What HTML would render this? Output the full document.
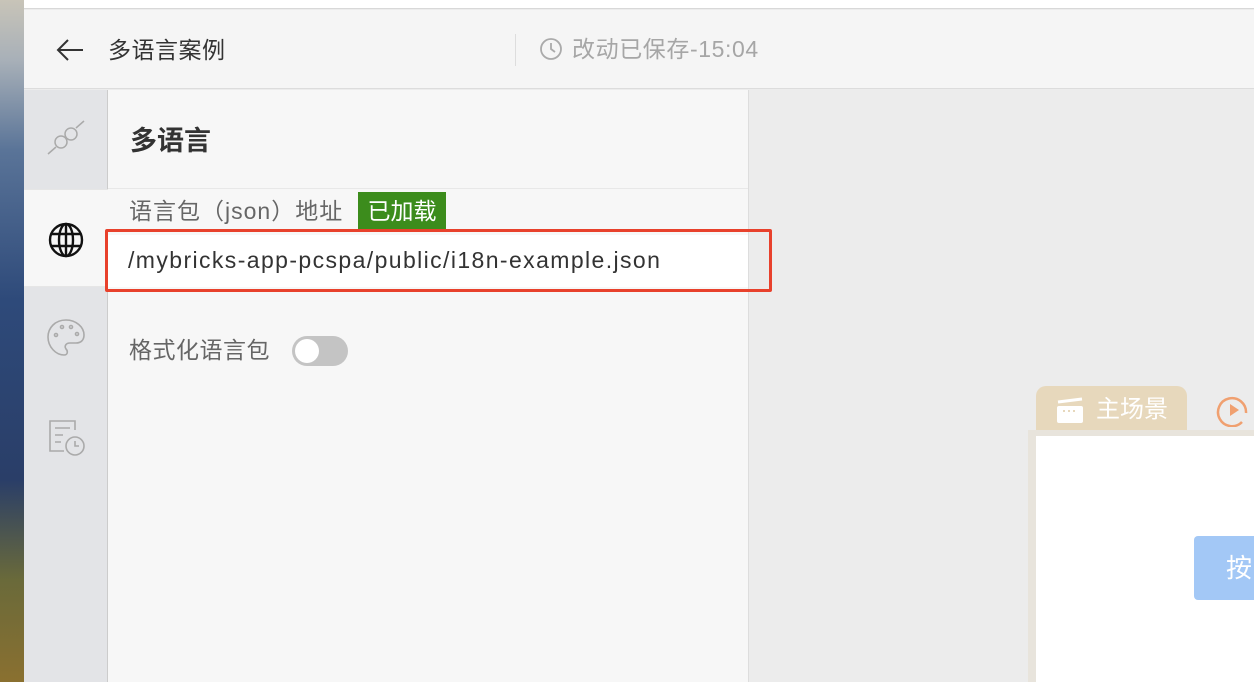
<!DOCTYPE html>
<html><head><meta charset="utf-8"><style>
*{margin:0;padding:0;box-sizing:border-box}
body{width:1254px;height:682px;overflow:hidden;position:relative;background:#ececec;font-family:"Liberation Sans","Noto Sans CJK SC",sans-serif}
.a{position:absolute;white-space:nowrap;line-height:1}
</style></head><body>
<div class="a" style="left:0;top:0;width:24px;height:682px;background:linear-gradient(#c8c4b8 0,#a8b0b8 60px,#5a7498 150px,#2e4a7a 300px,#2a3e68 480px,#6a6a3a 580px,#8a7030 682px)"></div>
<div class="a" style="left:24px;top:0;width:1230px;height:9px;background:#fff;border-bottom:1px solid #d8d8d8"></div>
<div class="a" style="left:24px;top:10px;width:1230px;height:79px;background:#f5f5f5;border-bottom:1px solid #dcdcdc"></div>
<svg class="a" style="left:55px;top:37px" width="30" height="26" viewBox="0 0 30 26"><path d="M13 3 L3 13 L13 23 M3 13 H28" fill="none" stroke="#333" stroke-width="2"/></svg>
<div class="a" style="left:108px;top:39px;font-size:23px;color:#333;letter-spacing:0.5px">多语言案例</div>
<div class="a" style="left:515px;top:34px;width:1px;height:32px;background:#ddd"></div>
<svg class="a" style="left:539px;top:37px" width="24" height="24" viewBox="0 0 24 24"><circle cx="12" cy="12" r="10" fill="none" stroke="#aaa" stroke-width="1.8"/><path d="M12 6v6l4 3" fill="none" stroke="#aaa" stroke-width="1.8"/></svg>
<div class="a" style="left:572px;top:38px;font-size:23px;color:#a6a6a6;letter-spacing:0.6px">改动已保存-15:04</div>
<div class="a" style="left:24px;top:90px;width:84px;height:592px;background:#e3e4e7;border-right:1px solid #ccc"></div>
<div class="a" style="left:24px;top:189px;width:84px;height:98px;background:#f7f7f7;border-top:1px solid #e6e6e6;border-bottom:1px solid #e6e6e6"></div>
<svg class="a" style="left:44px;top:116px" width="44" height="44" viewBox="0 0 44 44"><g fill="none" stroke="#aaa" stroke-width="1.5"><circle cx="17" cy="26" r="6"/><circle cx="27" cy="18" r="6"/><path d="M4 38 L12 31 M32 12 L40 5"/></g></svg>
<svg class="a" style="left:47px;top:221px" width="38" height="38" viewBox="0 0 38 38"><g fill="none" stroke="#111" stroke-width="2.4"><circle cx="19" cy="19" r="16"/><ellipse cx="19" cy="19" rx="7" ry="16"/><path d="M4 13H34M4 25H34M19 3V35"/></g></svg>
<svg class="a" style="left:44px;top:316px" width="44" height="44" viewBox="0 0 44 44"><g fill="none" stroke="#aaa" stroke-width="1.6"><path d="M22 4C11 4 4 12 4 21c0 10 8 18 16 18c4 0 4-4 2-6c-2-3 0-6 4-6h6c5 0 8-3 8-8C40 11 32 4 22 4z"/><circle cx="12" cy="19" r="1.5"/><circle cx="18" cy="11" r="1.5"/><circle cx="27" cy="11" r="1.5"/><circle cx="33" cy="18" r="1.5"/></g></svg>
<svg class="a" style="left:47px;top:418px" width="40" height="40" viewBox="0 0 40 40"><g fill="none" stroke="#aaa" stroke-width="1.6"><path d="M28 12V3H3v30h14M8 10h15M8 17h8M8 24h6"/><circle cx="28" cy="28" r="9"/><path d="M28 23v5h4"/></g></svg>
<div class="a" style="left:108px;top:90px;width:641px;height:592px;background:#f7f7f7;border-right:1px solid #ddd"></div>
<div class="a" style="left:108px;top:188px;width:640px;height:1px;background:#e8e8e8"></div>
<div class="a" style="left:130px;top:128px;font-size:27px;font-weight:bold;color:#333">多语言</div>
<div class="a" style="left:129px;top:200px;font-size:23px;color:#666;letter-spacing:1px">语言包（json）地址</div>
<div class="a" style="left:358px;top:192px;width:88px;height:38px;background:#3c8c1c;color:#fff;font-size:23px;line-height:38px;text-align:center">已加载</div>
<div class="a" style="left:108px;top:235px;width:640px;height:52px;background:#fff"></div>
<div class="a" style="left:105px;top:229px;width:667px;height:63px;border:3px solid #e8412c;border-radius:2px"></div>
<div class="a" style="left:128px;top:249px;font-size:23px;color:#333;letter-spacing:1.4px">/mybricks-app-pcspa/public/i18n-example.json</div>
<div class="a" style="left:129px;top:339px;font-size:23px;color:#666;letter-spacing:0.5px">格式化语言包</div>
<div class="a" style="left:292px;top:336px;width:56px;height:30px;border-radius:15px;background:#c4c4c4"></div>
<div class="a" style="left:295px;top:339px;width:24px;height:24px;border-radius:12px;background:#fff"></div>
<div class="a" style="left:1036px;top:386px;width:151px;height:50px;border-radius:10px 10px 0 0;background:#e7d8bc"></div>
<svg class="a" style="left:1055px;top:397px" width="30" height="28" viewBox="0 0 30 28"><rect x="2" y="9" width="26" height="17" rx="2" fill="#fff"/><path d="M3 5L27 2" stroke="#fff" stroke-width="3"/><path d="M8 14h2M13 14h2M18 14h2" stroke="#e7d8bc" stroke-width="2"/></svg>
<div class="a" style="left:1096px;top:398px;font-size:24px;color:#fff">主场景</div>
<svg class="a" style="left:1216px;top:393px" width="34" height="34" viewBox="0 0 34 34"><path d="M26 29A14 14 0 1 1 30 20" fill="none" stroke="#f0a070" stroke-width="2.5"/><path d="M14 11L23 17L14 23z" fill="#f0a070"/></svg>
<div class="a" style="left:1028px;top:430px;width:226px;height:252px;background:#e8e4dc"></div>
<div class="a" style="left:1036px;top:436px;width:218px;height:246px;background:#fff"></div>
<div class="a" style="left:1194px;top:536px;width:60px;height:64px;background:#a3c8f6;border-radius:4px 0 0 4px"></div>
<div class="a" style="left:1226px;top:555px;font-size:26px;color:#fff">按</div>
</body></html>
